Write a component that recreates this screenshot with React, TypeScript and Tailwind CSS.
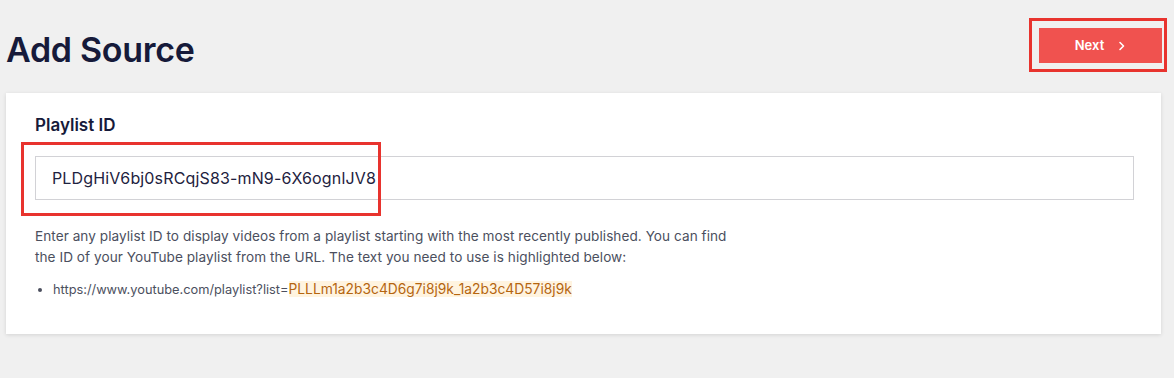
import React from "react";

export default function App() {
  return (
    <div className="min-h-[378px] w-full bg-[#f0f0f0] font-['Inter',sans-serif] text-[#161a3a]">
      <div className="flex items-start justify-between pl-[6px] pr-[7px] pt-[18px]">
        <h1 className="mt-[10px] text-[34px] font-semibold leading-[44px] tracking-[-0.3px] text-[#161a3a]">
          Add Source
        </h1>
        <div className="border-[3px] border-[#e8332e] pb-[6px] pl-[7px] pr-[2px] pt-[7px]">
          <button className="flex h-[35px] w-[123px] items-center justify-center gap-[14px] bg-[#f0524f] text-[13px] font-semibold text-white">
            <span>Next</span>
            <svg width="8" height="10" viewBox="0 0 8 10" fill="none">
              <path d="M2 1.5 L5.5 5 L2 8.5" stroke="white" strokeWidth="1.6" strokeLinecap="round" strokeLinejoin="round" />
            </svg>
          </button>
        </div>
      </div>
      <div className="mx-[6px] mt-[21px] w-[1155px] bg-white pb-[34px] pl-[29px] pr-[27px] pt-[22px] shadow-[0_1px_4px_rgba(0,0,0,0.12)]">
        <label className="block text-[17px] font-semibold leading-[20px] text-[#161a3a]">Playlist ID</label>
        <div className="relative mt-[21px]">
          <input
            readOnly
            value="PLDgHiV6bj0sRCqjS83-mN9-6X6ognlJV8"
            className="h-[44px] w-full border border-[#d2d2d6] bg-white px-[16px] text-[16px] tracking-[0.15px] text-[#1e2240] outline-none"
          />
          <div className="pointer-events-none absolute left-[-14px] top-[-14px] h-[74px] w-[360px] border-[3px] border-[#e8332e]"></div>
        </div>
        <p className="mt-[26px] w-[708px] text-[13.6px] leading-[21px] tracking-[0.05px] text-[#4b4f5e]">
          Enter any playlist ID to display videos from a playlist starting with the most recently published. You can find the ID of your YouTube playlist from the URL. The text you need to use is highlighted below:
        </p>
        <ul className="mt-[11px] list-disc pl-[18px] text-[12.8px] leading-[20px] text-[#4b4f5e]">
          <li>
            https://www.youtube.com/playlist?list=
            <span className="bg-[#fff4e0] text-[13.8px] text-[#b5650f]">PLLLm1a2b3c4D6g7i8j9k_1a2b3c4D57i8j9k</span>
          </li>
        </ul>
      </div>
    </div>
  );
}
